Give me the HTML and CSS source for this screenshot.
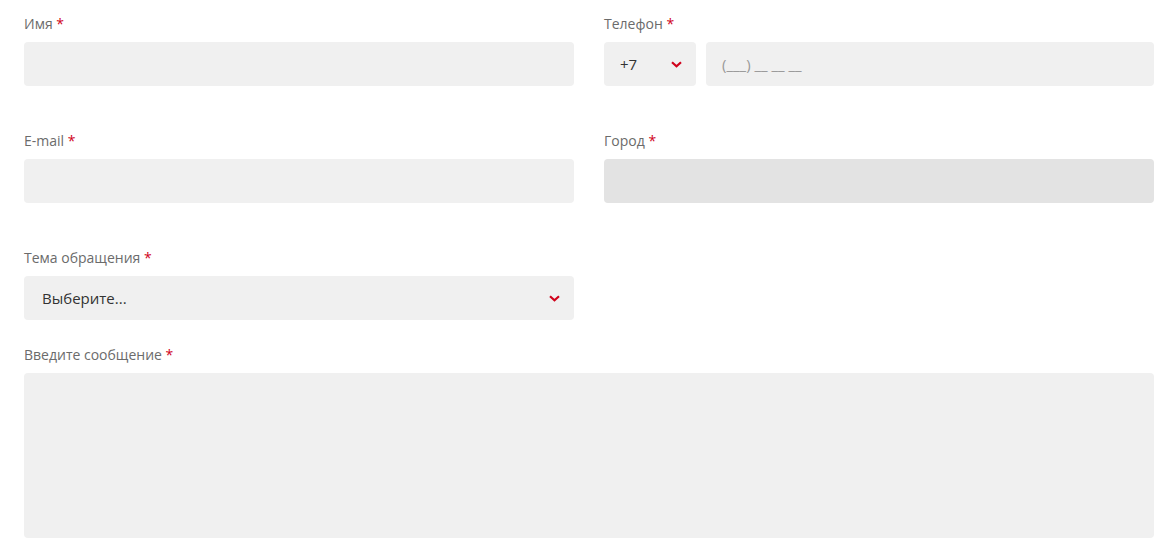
FILE: index.html
```html
<!DOCTYPE html>
<html lang="ru">
<head>
    <meta charset="UTF-8">
    <meta name="viewport" content="width=device-width, initial-scale=1.0">
    <title>Обратная связь</title>
    <link rel="stylesheet" href="styles.css">
</head>
<body>
    <form class="feedback-form">
        <div class="form-grid">
            <div class="field">
                <label class="field-label" for="name">Имя <span class="req">*</span></label>
                <input class="input" type="text" id="name">
            </div>
            <div class="field">
                <label class="field-label" for="phone">Телефон <span class="req">*</span></label>
                <div class="phone-row">
                    <div class="select select-code">
                        <span class="select-value">+7</span>
                        <svg class="chevron" width="11" height="7" viewBox="0 0 11 7"><path d="M1 1.2l4.5 4L10 1.2" fill="none" stroke="#d0021b" stroke-width="2.2"/></svg>
                    </div>
                    <input class="input" type="tel" id="phone" placeholder="(___) __ __ __">
                </div>
            </div>
            <div class="field">
                <label class="field-label" for="email">E-mail <span class="req">*</span></label>
                <input class="input" type="email" id="email">
            </div>
            <div class="field">
                <label class="field-label" for="city">Город <span class="req">*</span></label>
                <input class="input" type="text" id="city" disabled>
            </div>
            <div class="field field-compact">
                <label class="field-label">Тема обращения <span class="req">*</span></label>
                <div class="select">
                    <span class="select-value">Выберите...</span>
                    <svg class="chevron" width="11" height="7" viewBox="0 0 11 7"><path d="M1 1.2l4.5 4L10 1.2" fill="none" stroke="#d0021b" stroke-width="2.2"/></svg>
                </div>
            </div>
            <div class="field field-wide">
                <label class="field-label" for="message">Введите сообщение <span class="req">*</span></label>
                <textarea class="input textarea" id="message"></textarea>
            </div>
        </div>
    </form>
</body>
</html>
```

FILE: styles.css
```css
:root {
    --field-bg: #f0f0f0;
    --field-disabled: #e3e3e3;
    --label-color: #6b6b6b;
    --text-color: #333;
    --accent: #d0021b;
}

body {
    margin: 0;
    font-family: 'Open Sans', 'Noto Sans', sans-serif;
    background: #fff;
    color: var(--text-color);
}

.feedback-form {
    padding: 14px 13px 0 24px;
}

.form-grid {
    display: grid;
    grid-template-columns: 550px 550px;
    column-gap: 30px;
}

.field {
    display: flex;
    flex-direction: column;
    padding-bottom: 45px;
}

.field-compact {
    padding-bottom: 25px;
}

.field-wide {
    grid-column: 1 / 3;
    padding-bottom: 0;
}

.field-label {
    font-size: 14px;
    line-height: 20px;
    color: var(--label-color);
    margin-bottom: 8px;
}

.req {
    color: var(--accent);
}

.input {
    box-sizing: border-box;
    height: 44px;
    width: 100%;
    border: none;
    border-radius: 4px;
    background: var(--field-bg);
    padding: 0 16px;
    font-family: inherit;
    font-size: 15px;
    color: var(--text-color);
    outline: none;
}

.input::placeholder {
    color: #999;
}

.input:disabled {
    background: var(--field-disabled);
}

.textarea {
    height: 165px;
    resize: none;
    padding: 12px 16px;
}

.phone-row {
    display: flex;
    gap: 10px;
}

.select {
    box-sizing: border-box;
    height: 44px;
    border-radius: 4px;
    background: var(--field-bg);
    display: flex;
    align-items: center;
    justify-content: space-between;
    padding: 0 14px 0 18px;
    font-size: 15px;
    color: var(--text-color);
    cursor: pointer;
}

.select-code {
    flex: 0 0 92px;
    padding: 0 14px 0 16px;
}

.chevron {
    display: block;
}
```
